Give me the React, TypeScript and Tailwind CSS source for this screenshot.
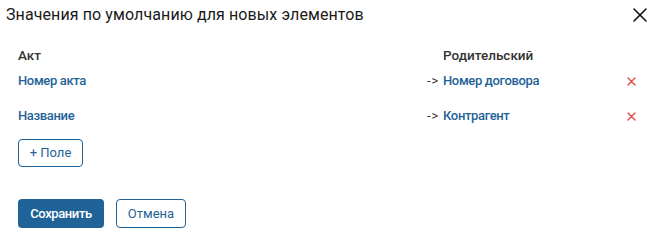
import { X } from "lucide-react";

const rows = [
  { field: "Номер акта", parent: "Номер договора" },
  { field: "Название", parent: "Контрагент" },
];

function RemoveIcon() {
  return (
    <svg width="9" height="9" viewBox="0 0 9 9" className="text-[#e5483f]">
      <path d="M1 1 L8 8 M8 1 L1 8" stroke="currentColor" strokeWidth="1.4" strokeLinecap="round" />
    </svg>
  );
}

export default function App() {
  return (
    <div className="w-[652px] h-[233px] bg-white text-[#222]" style={{ fontFamily: "Roboto, 'Liberation Sans', sans-serif" }}>
      <div className="h-[29px] flex items-center justify-between pl-[6px]">
        <h2 className="text-[16px] font-normal tracking-[0.1px] text-[#1a1a1a]">Значения по умолчанию для новых элементов</h2>
        <X size={24} strokeWidth={1.6} className="text-[#111]" />
      </div>
      <div className="pl-[18px] pt-[17px]">
        <div className="flex h-[18px] items-center text-[13.5px] font-medium text-[#333]">
          <div className="w-[425px]">Акт</div>
          <div>Родительский</div>
        </div>
        {rows.map((r, i) => (
          <div key={i} className={`flex h-[18px] items-center text-[13px] ${i === 0 ? "mt-[8px]" : "mt-[17px]"}`}>
            <div className="w-[409px] font-medium tracking-[-0.35px] text-[#1f6398]">{r.field}</div>
            <div className="w-[16px] text-[#333] tracking-[1px]">-&gt;</div>
            <div className="w-[184px] font-medium tracking-[-0.35px] text-[#1f6398]">{r.parent}</div>
            <RemoveIcon />
          </div>
        ))}
        <button className="mt-[14px] h-[28px] w-[65px] rounded-[4px] border border-[#1f6398] text-[13px] text-[#1f6398]">
          + Поле
        </button>
        <div className="mt-[32px] flex gap-[12px]">
          <button className="h-[29px] w-[86px] rounded-[4px] bg-[#1f6398] text-[13px] font-medium tracking-[-0.4px] text-white">
            Сохранить
          </button>
          <button className="h-[29px] w-[70px] rounded-[4px] border border-[#1f6398] text-[13px] text-[#1f6398]">
            Отмена
          </button>
        </div>
      </div>
    </div>
  );
}
